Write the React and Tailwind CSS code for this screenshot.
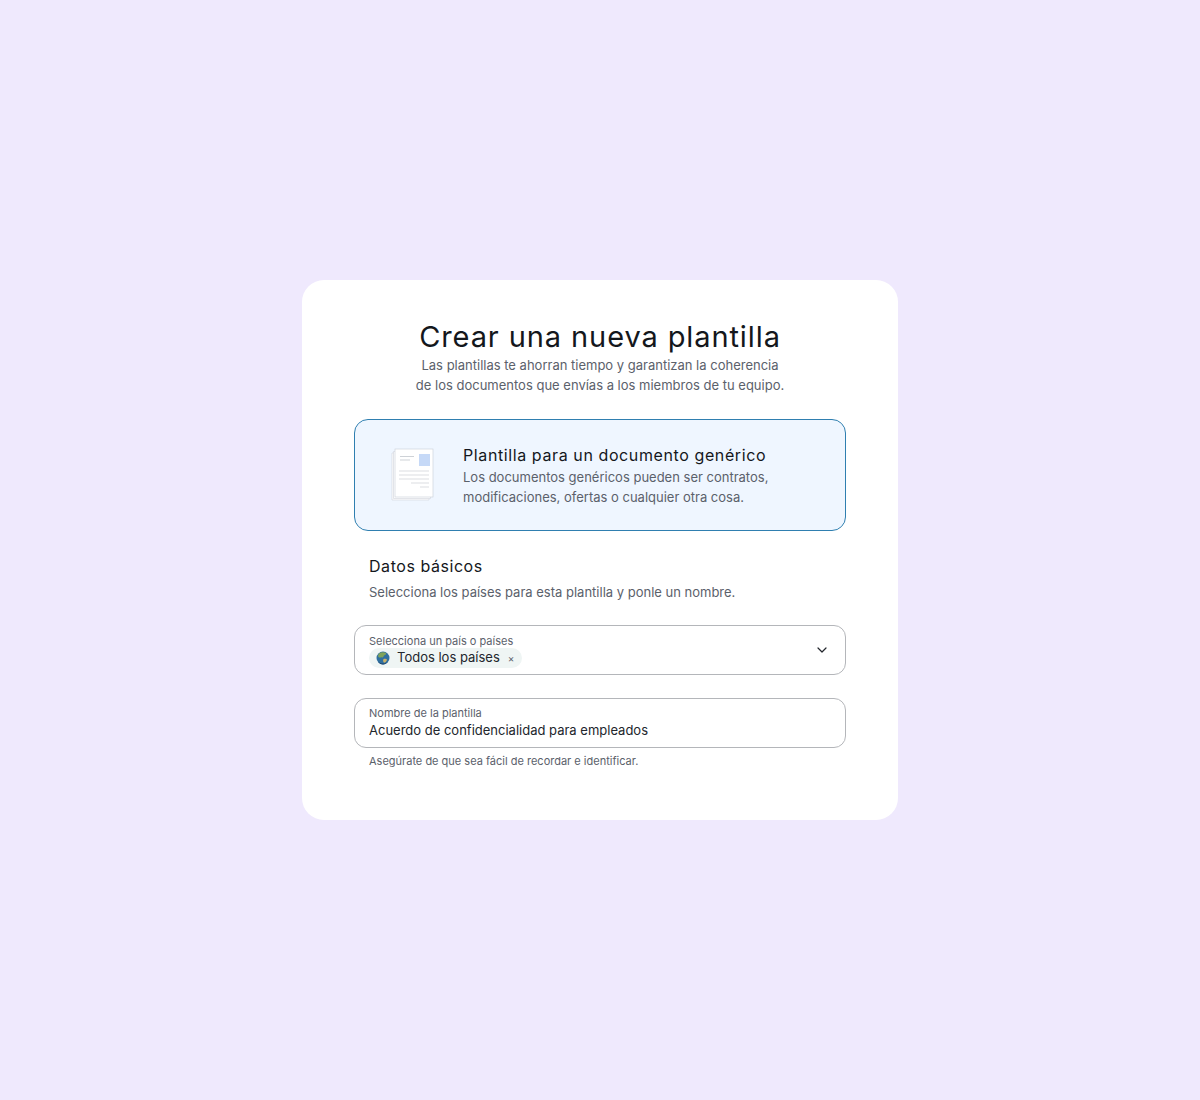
import React from "react";
import { ChevronDown } from "lucide-react";

function DocIcon() {
  return (
    <svg width="44" height="54" viewBox="0 0 44 54" fill="none">
      <path d="M3 5H1V52H38V50" stroke="#d5d9e0" strokeWidth="0.7" fill="#fff" />
      <path d="M4.500 3.500H2.500V50.500H39.500V49" stroke="#d5d9e0" strokeWidth="0.7" fill="#fff" />
      <rect x="4" y="1" width="38" height="48" fill="#fff" stroke="#cfd4dc" strokeWidth="0.7" />
      <rect x="28" y="6" width="11" height="12" fill="#c6d9f7" />
      <path d="M9 8.500H23M9 12H19" stroke="#b9bec6" strokeWidth="0.7" />
      <path d="M8 23H38M8 27H38M8 31H38M20 35H38M29 39H38" stroke="#c3c7ce" strokeWidth="0.6" />
    </svg>
  );
}

function Globe() {
  return (
    <svg width="14" height="14" viewBox="0 0 14 14">
      <circle cx="7" cy="7" r="6.500" fill="#2f6f9f" />
      <path d="M3 2.500C5 1 8 .8 10 2c.6 1-.5 2.200-2 2.400C7.800 6 6.200 6.800 5.200 6.300 4 7 2.800 6.600 2 5.600 2 4.400 2.400 3.400 3 2.500Z" fill="#7fa35a" />
      <path d="M7.500 8c1.500-.4 3 0 3.500.8-.4 1.400-1.400 2.600-2.800 3-1-.6-1.500-2.300-.7-3.800Z" fill="#c9b06a" />
      <path d="M2 10.500c2.500 2.500 7 3 10 .2-1.200 1.500-3 2.800-5 2.800-2.200 0-4-1.200-5-3Z" fill="#1d3f66" />
    </svg>
  );
}

export default function App() {
  return (
    <div className="min-h-[1100px] bg-[#efe9fd] pt-[280px] font-['Inter',sans-serif]">
      <div className="mx-auto h-[540px] w-[596px] rounded-[22px] bg-white px-[52px] pt-[38px]">
        <h1 className="text-center text-[29px] leading-[37px] font-normal tracking-[0.9px] text-[#14171c]">
          Crear una nueva plantilla
        </h1>
        <p className="text-center text-[13px] leading-[20px] text-[#5b616b]">
          Las plantillas te ahorran tiempo y garantizan la coherencia
          <br />
          de los documentos que envías a los miembros de tu equipo.
        </p>

        <div className="mt-[24px] flex h-[112px] items-center rounded-[14px] border border-[#2f7fb0] bg-[#eff6ff] pl-[36px]">
          <DocIcon />
          <div className="ml-[28px]">
            <div className="text-[16px] leading-[22px] tracking-[0.6px] text-[#14171c]">
              Plantilla para un documento genérico
            </div>
            <p className="mt-[1px] text-[13px] leading-[20px] text-[#5b616b]">
              Los documentos genéricos pueden ser contratos,
              <br />
              modificaciones, ofertas o cualquier otra cosa.
            </p>
          </div>
        </div>

        <div className="mt-[24px] px-[15px]">
          <h2 className="text-[16px] leading-[22px] tracking-[0.55px] text-[#14171c]">
            Datos básicos
          </h2>
          <p className="mt-[5px] text-[13px] leading-[20px] text-[#5b616b]">
            Selecciona los países para esta plantilla y ponle un nombre.
          </p>
        </div>

        <div className="mt-[23px] flex h-[50px] items-start justify-between rounded-[12px] border border-[#b4b6ba] pt-[8px] pr-[15px] pl-[14px]">
          <div>
            <div className="text-[11px] leading-[14px] text-[#5b616b]">
              Selecciona un país o países
            </div>
            <div className="flex h-[20px] w-[153px] items-center rounded-full bg-[#eff5f4] pl-[7px]">
              <Globe />
              <span className="ml-[7px] text-[13px] text-[#22262c]">Todos los países</span>
              <span className="ml-[8px] text-[10px] text-[#5b616b]">×</span>
            </div>
          </div>
          <ChevronDown size={16} strokeWidth={1.8} className="mt-[8px] text-[#22262c]" />
        </div>

        <div className="mt-[23px] flex h-[50px] flex-col justify-center rounded-[12px] border border-[#b4b6ba] pl-[14px]">
          <div className="text-[11px] leading-[14px] text-[#5b616b]">Nombre de la plantilla</div>
          <div className="text-[13px] leading-[20px] text-[#22262c]">
            Acuerdo de confidencialidad para empleados
          </div>
        </div>
        <p className="mt-[6px] pl-[15px] text-[11px] leading-[14px] text-[#5b616b]">
          Asegúrate de que sea fácil de recordar e identificar.
        </p>
      </div>
    </div>
  );
}
